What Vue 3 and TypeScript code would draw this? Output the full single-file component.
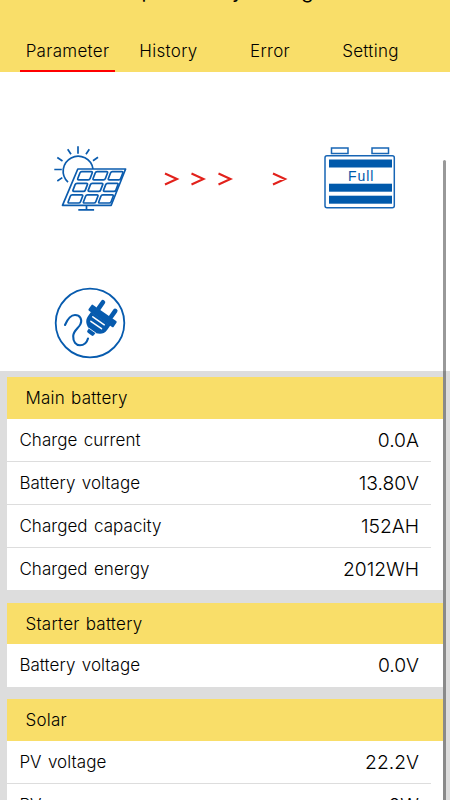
<script setup lang="ts">
interface Row { label: string; value: string }
interface Group { title: string; rows: Row[] }

const tabs: string[] = ['Parameter', 'History', 'Error', 'Setting']
const active = 'Parameter'

const cells: [number, number][] = [
  [26.3, 26.7], [41.6, 26.7], [56.9, 26.7],
  [21.5, 38.3], [36.8, 38.3], [52.1, 38.3],
  [16.7, 49.9], [32, 49.9], [47.3, 49.9],
]

const groups: Group[] = [
  {
    title: 'Main battery',
    rows: [
      { label: 'Charge current', value: '0.0A' },
      { label: 'Battery voltage', value: '13.80V' },
      { label: 'Charged capacity', value: '152AH' },
      { label: 'Charged energy', value: '2012WH' },
    ],
  },
  { title: 'Starter battery', rows: [{ label: 'Battery voltage', value: '0.0V' }] },
  {
    title: 'Solar',
    rows: [
      { label: 'PV voltage', value: '22.2V' },
      { label: 'PV power', value: '0W' },
    ],
  },
]
</script>

<template>
  <div class="screen">
    <header class="top">
      <h1 class="title">Simple Battery Manager</h1>
      <nav class="tabs">
        <button v-for="t in tabs" :key="t" class="tab" :class="{ active: t === active }">
          <span>{{ t }}</span>
        </button>
      </nav>
    </header>

    <section class="diagram">
      <div class="flow">
        <svg class="solar" width="74" height="67" viewBox="0 0 74 67" fill="none" stroke="#0b5cae" stroke-width="1.7">
          <path d="M14 37.200A15 15 0 1 1 39 24" />
          <path d="M24 1.200v7.500M13.700 4.300l3.300 5M35.300 4.300l-3.300 5M3.300 12.500l5.200 3.500M44 12.300l-5 3.500M.3 24.500h7.500M3.300 36l5-3.400" />
          <path d="M23.800 24h47.800l-14.400 36.300h-48.700z" stroke-linejoin="round" />
          <path
            v-for="([x, y], i) in cells"
            :key="i"
            :transform="`translate(${x} ${y})`"
            stroke-linejoin="round"
            d="M1.500 0h9.500q1.400 0 .9 1.300l-2.100 5.500q-.5 1.300-1.900 1.300h-9.500q-1.400 0-.9-1.300l2.100-5.500q.5-1.300 1.900-1.300z"
          />
          <path d="M32.500 60v4.500M24.300 64.800h15.800" />
        </svg>

        <svg class="arrows" width="124" height="16" viewBox="0 0 124 16" fill="none" stroke="#e2211b" stroke-width="2.1">
          <path d="M1 2.500l12 5.500l-12 5.500M27.500 2.500l12 5.500l-12 5.500M54.500 2.500l12 5.500l-12 5.500M109 2.500l12 5.500l-12 5.500" />
        </svg>

        <svg class="battery" width="72" height="64" viewBox="0 0 72 64">
          <g fill="none" stroke="#1765b5" stroke-width="1.500">
            <rect x="7.500" y="2" width="16.500" height="5.500" />
            <rect x="48" y="2" width="16.500" height="5.500" />
            <rect x="1" y="9.700" width="69.300" height="52" rx="2" />
          </g>
          <g fill="#0059ab">
            <rect x="5" y="13.500" width="63" height="8" />
            <rect x="5" y="37.700" width="63" height="8" />
            <rect x="5" y="49.700" width="63" height="8" />
          </g>
          <text x="37.200" y="34.500" text-anchor="middle" class="full">Full</text>
        </svg>
      </div>

      <svg class="plug" width="72" height="72" viewBox="0 0 72 72" fill="none" stroke="#075bae">
        <circle cx="36" cy="36" r="34.300" stroke-width="1.800" />
        <path d="M11 38C14 31 17 28 21 28C26 28 28.500 32.500 26.500 37C25 41 19.500 43 19.200 49C19 55 22 58.300 26 58.300C30.500 58.300 33 55 34 51.500" stroke-width="2.100" stroke-linecap="round" />
        <g transform="translate(48.500 29) rotate(35)">
          <path d="M-7.500-4v-7.500M7.500-4v-7.500" stroke-width="4.600" stroke-linecap="round" />
          <rect x="-15.300" y="-3.700" width="30.600" height="7.200" rx="1.200" fill="#075bae" stroke="none" />
          <path d="M-11.800 3h23.600v5.500c0 6-4 8-7.800 9.500v2.500q0 1.700-1.700 1.700h-4.600q-1.700 0-1.700-1.700v-2.500c-4-1.500-7.800-4-7.800-9.500z" fill="#075bae" stroke="none" />
          <path d="M-7.500 6.200h14M-6.500 11h13" stroke="#fff" stroke-width="1.500" stroke-linecap="round" />
          <path d="M-4.500 17.800h9" stroke="#fff" stroke-width=".8" />
        </g>
      </svg>
    </section>

    <main class="groups">
      <section v-for="g in groups" :key="g.title" class="group">
        <h2 class="group-title"><span>{{ g.title }}</span></h2>
        <div v-for="r in g.rows" :key="r.label" class="row">
          <span class="label">{{ r.label }}</span>
          <span class="value">{{ r.value }}</span>
        </div>
      </section>
    </main>
    <div class="scrollbar"></div>
  </div>
</template>

<style>
body { margin: 0; overflow: hidden; }
</style>

<style scoped>
.screen {
  position: relative;
  width: 450px;
  height: 800px;
  overflow: hidden;
  background: #fff;
  color: #000;
  font-family: Inter, "Noto Sans", sans-serif;
  font-weight: 300;
}
.top { height: 72px; background: #f9de69; overflow: hidden; }
.title {
  margin: -21px 0 0;
  padding-right: 11px;
  height: 24px;
  font-size: 20px;
  line-height: 24px;
  font-weight: 400;
  text-align: center;
  white-space: nowrap;
}
.tabs { display: grid; grid-template-columns: 95px 107px 96px 105px; padding-left: 20px; margin-top: 27px; }
.tab {
  box-sizing: border-box;
  height: 42px;
  padding: 2px 0 0;
  border: 0;
  border-bottom: 2px solid transparent;
  background: none;
  color: inherit;
  font: inherit;
  font-size: 17px;
  letter-spacing: 0.3px;
}
.tab.active { border-color: #f00; }
.diagram { box-sizing: border-box; height: 299px; padding: 73px 54px 0; }
.flow { display: flex; align-items: flex-start; height: 67px; }
.arrows { margin: 26px 0 0 36px; }
.battery { margin: 1px 0 0 36px; }
.full { fill: #0059ab; font: 400 14px "Liberation Sans", sans-serif; letter-spacing: 1px; }
.plug { display: block; margin-top: 75px; }
.groups { padding: 6px 7px 0 7.4px; background: #ddd; }
.group { background: #fff; margin-bottom: 12.2px; }
.group-title {
  display: flex;
  align-items: center;
  height: 41.8px;
  margin: 0;
  padding-left: 18px;
  background: #f9de69;
  font-size: 17px;
  font-weight: 300;
  letter-spacing: 0.25px;
  word-spacing: 1px;
}
.row {
  box-sizing: border-box;
  display: flex;
  align-items: center;
  justify-content: space-between;
  height: 43.2px;
  margin-right: 12px;
  padding: 0 12px;
  border-bottom: 1px solid #ddd;
}
.row:last-child { height: 42.1px; border-bottom: 0; }
.label { font-size: 17px; letter-spacing: 0.05px; word-spacing: 1.5px; }
.value { font-size: 19.3px; }
.scrollbar {
  position: absolute;
  top: 160px;
  right: 4px;
  bottom: -4px;
  width: 3px;
  border-radius: 2px;
  background: rgba(70, 70, 70, 0.55);
}
</style>
